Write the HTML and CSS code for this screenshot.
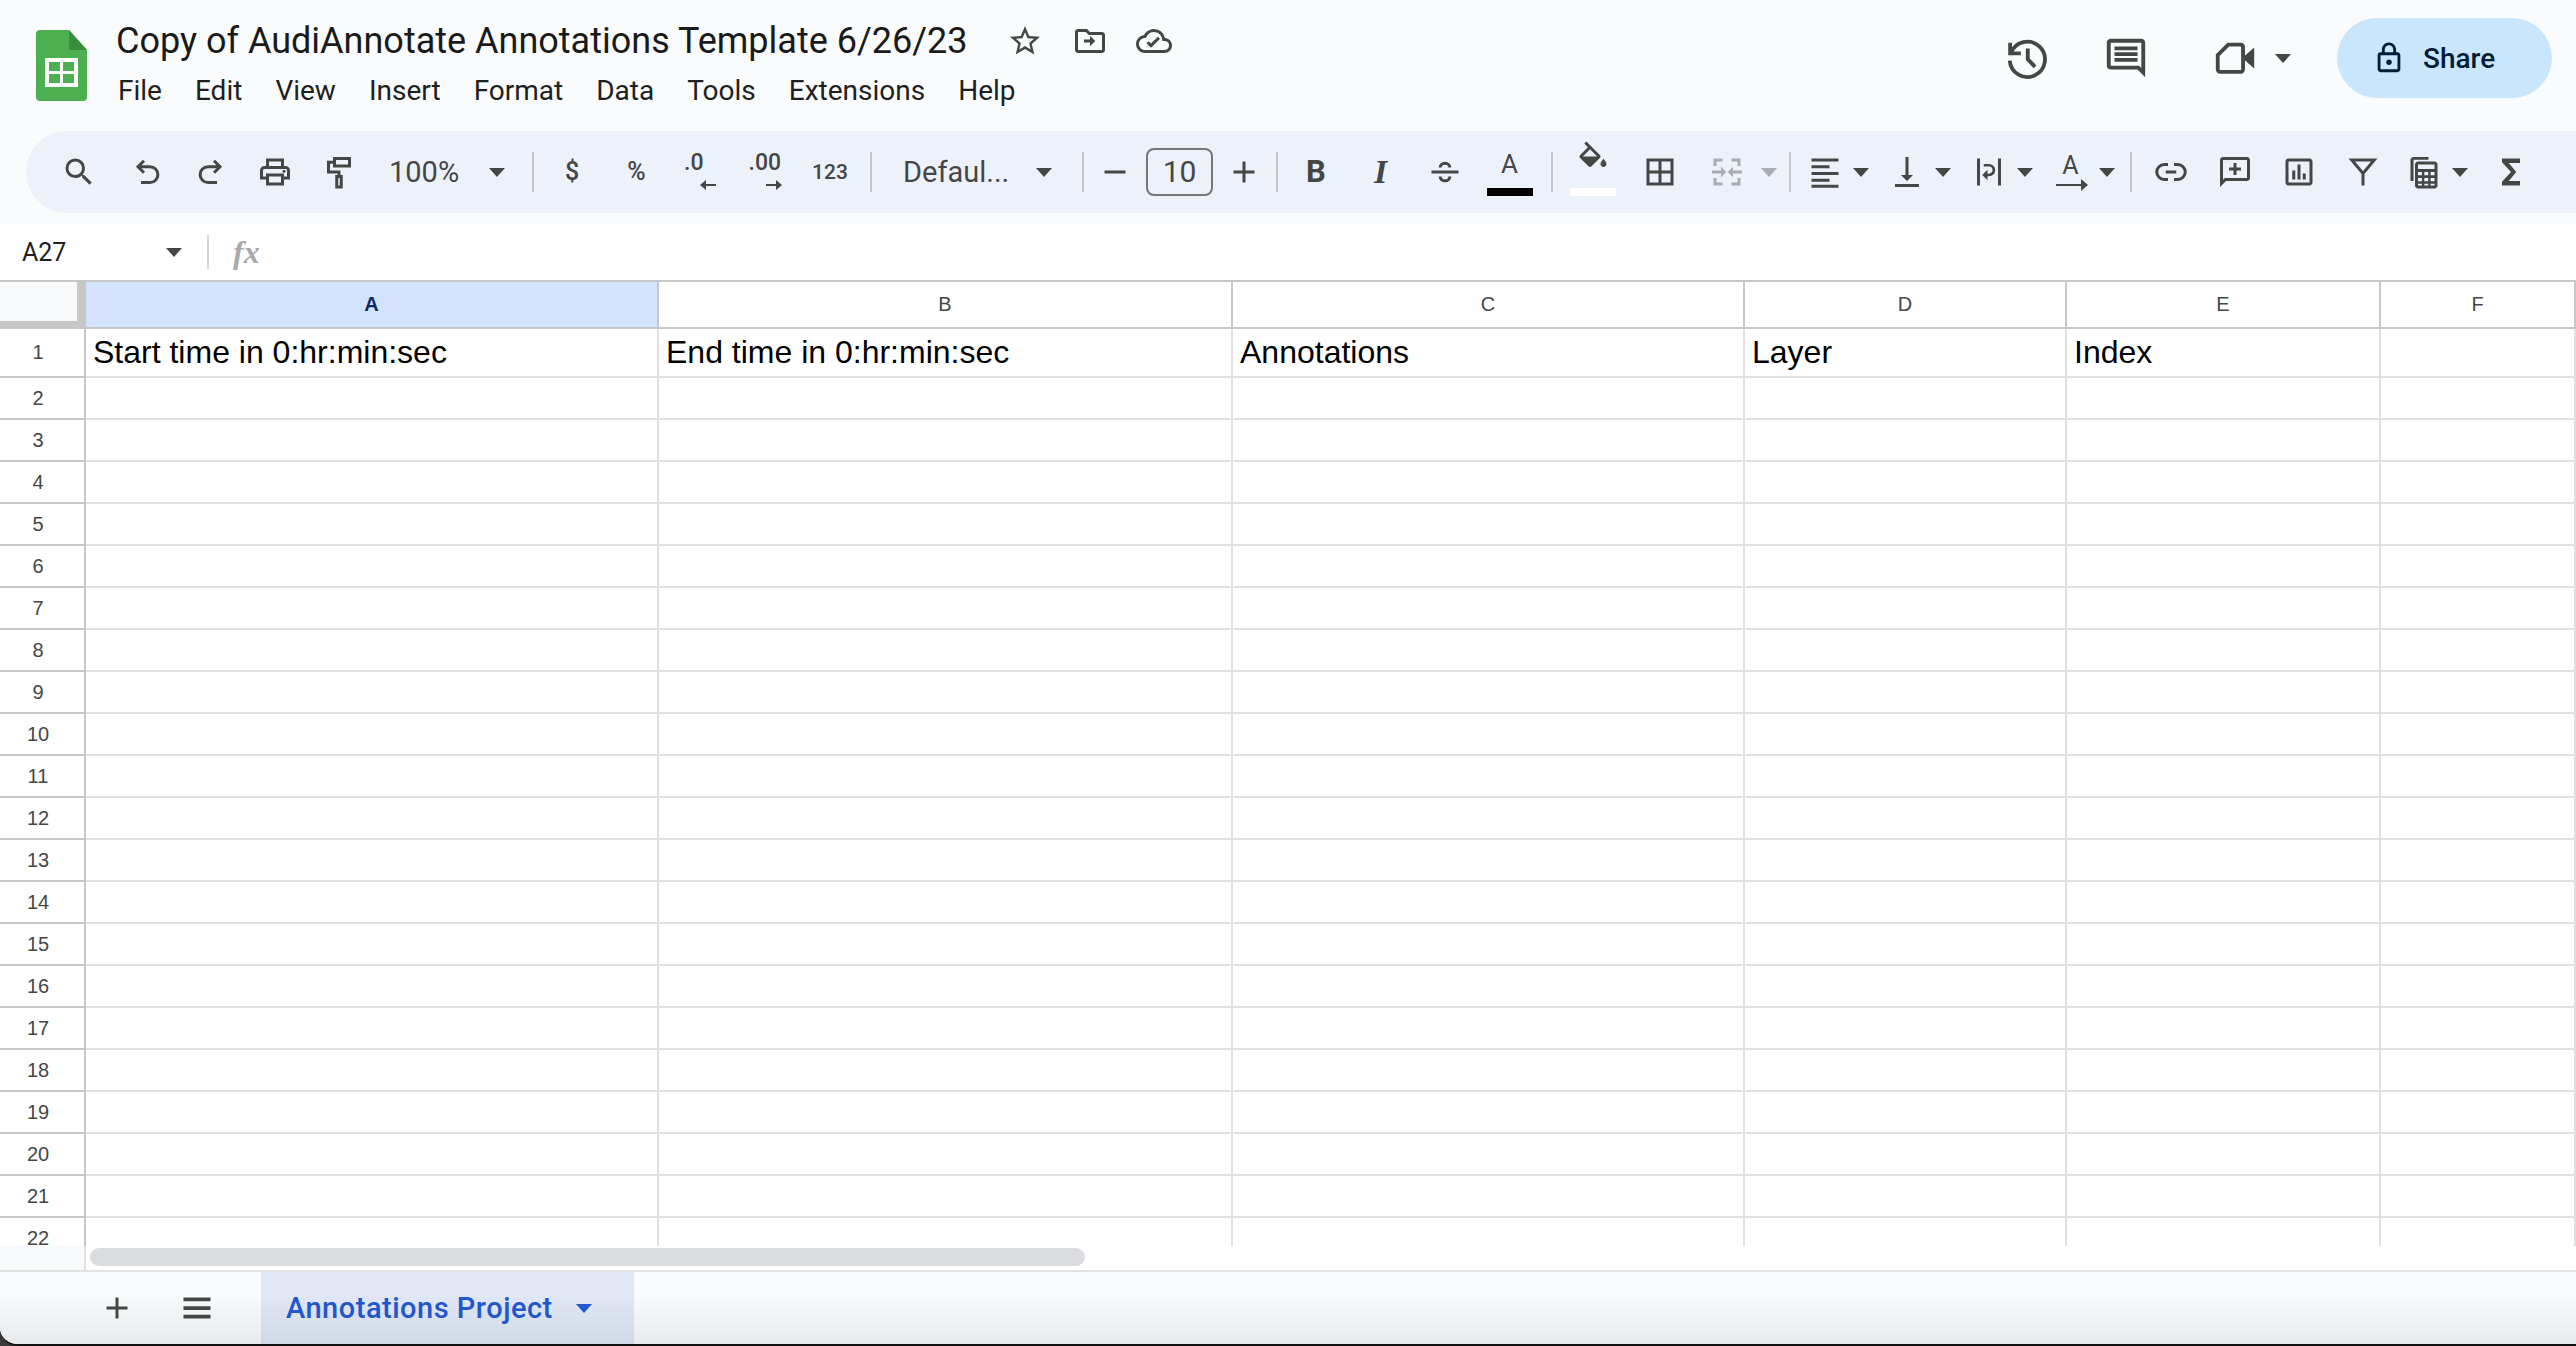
FILE: index.html
```html
<!DOCTYPE html>
<html lang="en">
<head>
    <meta charset="UTF-8">
    <title>Copy of AudiAnnotate Annotations Template 6/26/23</title>
    <link rel="stylesheet" href="styles.css">
</head>
<body>
<div class="app">
    <!-- title + menus -->
    <header class="topbar">
        <svg class="logo" viewBox="0 0 51 71">
            <path fill="#4caf50" d="M4 0H33L51 20V67a4 4 0 0 1-4 4H4a4 4 0 0 1-4-4V4a4 4 0 0 1 4-4z"/>
            <path fill="#388e3c" d="M33 0L51 20H33z"/>
            <path fill="#fff" d="M9 28H42V57H9z"/>
            <path fill="#4caf50" d="M13 32H24V41H13zM27 32H38V41H27zM13 44H24V53H13zM27 44H38V53H27z"/>
        </svg>
        <div class="docinfo">
            <div class="titlerow">
                <h1 class="doctitle">Copy of AudiAnnotate Annotations Template 6/26/23</h1>
                <svg class="ico title-star" viewBox="0 0 24 24"><path d="M22 9.24l-7.19-.62L12 2 9.19 8.63 2 9.24l5.46 4.73L5.82 21 12 17.27 18.18 21l-1.63-7.03L22 9.24zM12 15.4l-3.76 2.27 1-4.28-3.32-2.88 4.38-.38L12 6.1l1.71 4.04 4.38.38-3.32 2.88 1 4.28L12 15.4z"/></svg>
                <svg class="ico title-move" viewBox="0 0 24 24"><path d="M20 6h-8l-2-2H4c-1.1 0-2 .9-2 2v12c0 1.1.9 2 2 2h16c1.1 0 2-.9 2-2V8c0-1.1-.9-2-2-2zm0 12H4V6h5.17l2 2H20v10zM12 11H8v2h4v2.5l3.5-3.5L12 8.5V11z"/></svg>
                <svg class="ico title-cloud" viewBox="0 0 24 24"><path d="M19.35 10.04A7.49 7.49 0 0 0 12 4C9.11 4 6.6 5.64 5.35 8.04A5.994 5.994 0 0 0 0 14c0 3.31 2.69 6 6 6h13c2.76 0 5-2.24 5-5 0-2.64-2.05-4.78-4.65-4.96zM19 18H6c-2.21 0-4-1.79-4-4 0-2.05 1.53-3.76 3.56-3.97l1.07-.11.5-.95A5.47 5.47 0 0 1 12 6c2.62 0 4.88 1.86 5.39 4.43l.3 1.5 1.53.11A2.98 2.98 0 0 1 22 15c0 1.65-1.35 3-3 3zm-9-1.5l-3-3 1.4-1.4 1.6 1.6 4.6-4.6 1.4 1.4-6 6z"/></svg>
            </div>
            <nav class="menus">
                <span>File</span><span>Edit</span><span>View</span><span>Insert</span><span>Format</span><span>Data</span><span>Tools</span><span>Extensions</span><span>Help</span>
            </nav>
        </div>
        <div class="actions">
            <svg class="ico-lg act-history" viewBox="0 0 24 24"><path class="line" d="M3.2 4v5.6h5.6M3.6 9.4A9.2 9.2 0 1 1 3 13.4M12.4 7v5.6l3.8 4"/></svg>
            <svg class="ico-lg act-comment" viewBox="0 0 24 24"><path d="M21.99 4c0-1.1-.89-2-1.99-2H4c-1.1 0-2 .9-2 2v12c0 1.1.9 2 2 2h14l4 4-.01-18zM20 4v13.17L18.83 16H4V4h16zM6 12h12v2H6zm0-3h12v2H6zm0-3h12v2H6z"/></svg>
            <svg class="ico-lg act-video" viewBox="0 0 24 24"><path class="line" d="M8.5 5H15a1.2 1.2 0 0 1 1.200 1.200V18a1.200 1.200 0 0 1-1.200 1.200H4.200A1.200 1.200 0 0 1 3 18V10.500z"/><path d="M17 11l5-4.500v11L17 13z"/></svg>
            <span class="caret act-caret"></span>
            <div class="share">
                <svg class="share-lock" viewBox="0 0 24 24"><path d="M18 8h-1V6c0-2.760-2.240-5-5-5S7 3.240 7 6v2H6c-1.100 0-2 .9-2 2v10c0 1.100.9 2 2 2h12c1.100 0 2-.9 2-2V10c0-1.100-.9-2-2-2zM9 6c0-1.660 1.340-3 3-3s3 1.340 3 3v2H9V6zm9 14H6V10h12v10zm-6-3c1.100 0 2-.9 2-2s-.9-2-2-2-2 .9-2 2 .9 2 2 2z"/></svg>
                <span>Share</span>
            </div>
        </div>
    </header>

    <!-- toolbar -->
    <div class="toolbar">
        <div class="tb-group g-start">
            <svg class="ico after-search" viewBox="0 0 24 24"><path d="M15.500 14h-.79l-.28-.27A6.471 6.471 0 0 0 16 9.500 6.500 6.500 0 1 0 9.500 16c1.610 0 3.090-.59 4.270-1.570l.27.28v.79l5 4.990L20.490 19l-4.990-5zm-6 0C7.010 14 5 11.990 5 9.500S7.010 5 9.500 5 14 7.010 14 9.500 11.990 14 9.500 14z"/></svg>
            <svg class="ico" viewBox="0 0 24 24"><path class="line" d="M10 4.500L6 8.500l4 4M6 8.500h8a5 5 0 0 1 0 10.500H8"/></svg>
            <svg class="ico" viewBox="0 0 24 24"><path class="line" d="M14 4.500l4 4-4 4M18 8.500h-8a5 5 0 0 0 0 10.500h6"/></svg>
            <svg class="ico" viewBox="0 0 24 24"><path d="M19 8h-1V3H6v5H5c-1.660 0-3 1.340-3 3v6h4v4h12v-4h4v-6c0-1.660-1.340-3-3-3zM8 5h8v3H8V5zm8 12v2H8v-4h8v2zm2-2v-2H6v2H4v-4c0-.55.45-1 1-1h14c.55 0 1 .45 1 1v4h-2z"/><circle cx="18" cy="11.500" r="1"/></svg>
            <svg class="ico" viewBox="0 0 24 24"><path class="line" d="M9 3h10v5H9zM9 5.500H5v6.500h7v3M10.500 15h3v7h-3z"/></svg>
        </div>
        <div class="tb-group g-zoom">
            <span class="tb-text zoomval">100%</span>
            <span class="caret"></span>
        </div>
        <i class="sep"></i>
        <div class="tb-group g-num">
            <span class="tb-text num-ico">$</span>
            <span class="tb-text num-ico">%</span>
            <div class="dec"><b>.0</b><svg class="dec-arrow dec-left" viewBox="0 0 16 10"><path d="M6 0v4h10v2H6v4L0 5z"/></svg></div>
            <div class="dec"><b>.00</b><svg class="dec-arrow dec-right" viewBox="0 0 16 10"><path d="M10 0v4H0v2h10v4l6-5z"/></svg></div>
            <span class="tb-text num-ico more">123</span>
        </div>
        <i class="sep"></i>
        <div class="tb-group g-font">
            <span class="tb-text fontname">Defaul...</span>
            <span class="caret"></span>
        </div>
        <i class="sep"></i>
        <div class="tb-group g-size">
            <svg class="ico" viewBox="0 0 24 24"><path d="M5 11h14v2H5z"/></svg>
            <div class="sizebox">10</div>
            <svg class="ico" viewBox="0 0 24 24"><path d="M19 13h-6v6h-2v-6H5v-2h6V5h2v6h6z"/></svg>
        </div>
        <i class="sep"></i>
        <div class="tb-group g-style">
            <span class="stylechar bold">B</span>
            <span class="stylechar ital">I</span>
            <svg class="ico" viewBox="0 0 24 24"><path d="M3 11h18v2H3z"/><path class="line" d="M8.800 9c0-1.600 1.300-2.800 3.200-2.800s3.200 1.200 3.200 2.800M8.800 15c0 1.700 1.300 2.900 3.200 2.900s3.200-1.200 3.200-2.900"/></svg>
            <div class="colorbtn"><span>A</span><i class="swatch black"></i></div>
        </div>
        <i class="sep"></i>
        <div class="tb-group g-fill">
            <div class="colorbtn">
                <svg class="fill-ico" viewBox="0 0 24 24"><path d="M16.560 9.940L7.620 1 6.200 2.410l2.380 2.380-5.150 5.150a1.490 1.490 0 0 0 0 2.120l5.500 5.500c.29.29.68.44 1.060.44s.77-.15 1.060-.44l5.500-5.500c.59-.58.59-1.530.01-2.120zM5.210 11L10 6.210 14.790 11H5.210zM19 12.500s-2 2.170-2 3.500c0 1.100.9 2 2 2s2-.9 2-2c0-1.330-2-3.500-2-3.500z"/></svg>
                <i class="swatch white"></i>
            </div>
            <svg class="ico" viewBox="0 0 24 24"><path d="M3 3v18h18V3H3zm8 16H5v-6h6v6zm0-8H5V5h6v6zm8 8h-6v-6h6v6zm0-8h-6V5h6v6z"/></svg>
            <div class="split off">
                <svg class="ico" viewBox="0 0 24 24"><path d="M3 3h6v2H5v3H3zM15 3h6v5h-2V5h-4zM3 16h2v3h4v2H3zM19 16h2v5h-6v-2h4z"/><path d="M2 11h6V8.500l3.500 3.500L8 15.500V13H2zM22 11h-6V8.500L12.500 12l3.500 3.500V13h6z"/></svg>
                <span class="caret"></span>
            </div>
        </div>
        <i class="sep"></i>
        <div class="tb-group g-align">
            <div class="split">
                <svg class="ico" viewBox="0 0 24 24"><path d="M3 3h18v2H3zM3 7.500h12v2H3zM3 12h18v2H3zM3 16.500h12v2H3zM3 20.500h18v2H3z"/></svg>
                <span class="caret"></span>
            </div>
            <div class="split">
                <svg class="ico" viewBox="0 0 24 24"><path d="M4 20h16v2H4zM11 2h2v12h3l-4 4-4-4h3z"/></svg>
                <span class="caret"></span>
            </div>
            <div class="split">
                <svg class="ico" viewBox="0 0 24 24"><path d="M4 3h2v18H4zM18 3h2v18h-2z"/><path class="line thin" d="M8.500 7.500h3.500a3 3 0 0 1 0 6.500H9.500"/><path d="M11 10.500v7L7.500 14z"/></svg>
                <span class="caret"></span>
            </div>
            <div class="split">
                <div class="rotate"><span>A</span><svg viewBox="0 0 32 12"><path d="M0 5h25V0l7 6-7 6V7H0z"/></svg></div>
                <span class="caret"></span>
            </div>
        </div>
        <i class="sep"></i>
        <div class="tb-group g-insert">
            <svg class="ico" viewBox="0 0 24 24"><path class="line" d="M10 7H7.500a5 5 0 0 0 0 10H10M14 7h2.500a5 5 0 0 1 0 10H14M8.500 12h7"/></svg>
            <svg class="ico" viewBox="0 0 24 24"><path d="M22 4c0-1.100-.9-2-2-2H4c-1.100 0-2 .9-2 2v18l4-4h14c1.100 0 2-.9 2-2V4zm-2 12H5.170L4 17.170V4h16v12zM11 6h2v3h3v2h-3v3h-2v-3H8V9h3z"/></svg>
            <svg class="ico" viewBox="0 0 24 24"><path d="M19 3H5c-1.100 0-2 .9-2 2v14c0 1.100.9 2 2 2h14c1.100 0 2-.9 2-2V5c0-1.100-.9-2-2-2zm0 16H5V5h14v14zM7.500 11h2v6h-2zM11 7h2v10h-2zM14.500 13h2v4h-2z"/></svg>
            <svg class="ico" viewBox="0 0 24 24"><path class="line" d="M4.500 4h15L12 13zM12 13v8"/></svg>
            <div class="split calc-split">
                <svg class="ico" viewBox="0 0 24 24"><path d="M3 4c0-1.100.9-2 2-2h10v1.800H5V18H3z"/><path d="M8 5h11c1.100 0 2 .9 2 2v14c0 1.100-.9 2-2 2H8c-1.100 0-2-.9-2-2V7c0-1.100.9-2 2-2zm0 2v3h11V7zm0 5v2.200h2.600V12zm4.200 0v2.200h2.600V12zm4.200 0v2.200H19V12zM8 16v2.200h2.600V16zm4.200 0v2.200h2.600V16zm4.200 0v2.200H19V16zM8 19.800V21h2.600v-1.200zm4.200 0V21h2.600v-1.200zm4.200 0V21H19v-1.200z"/></svg>
                <span class="caret"></span>
            </div>
            <svg class="ico sigma" viewBox="0 0 24 24"><path d="M18 3H6v2.500l6 6.500-6 6.500V21h12v-3h-7.500l5-6-5-6H18z"/></svg>
        </div>
    </div>

    <!-- name box / formula -->
    <div class="formulabar">
        <span class="namebox">A27</span>
        <span class="caret"></span>
        <i class="fbar-sep"></i>
        <span class="fx">fx</span>
    </div>

    <!-- sheet -->
    <div class="sheet">
        <div class="row colhead">
            <div class="corner"></div>
            <div class="head on">A</div><div class="head">B</div><div class="head">C</div><div class="head">D</div><div class="head">E</div><div class="head">F</div>
        </div>
        <div class="row first"><div class="rownum">1</div><div class="cell">Start time in 0:hr:min:sec</div><div class="cell">End time in 0:hr:min:sec</div><div class="cell">Annotations</div><div class="cell">Layer</div><div class="cell">Index</div><div class="cell"></div></div>
        <div class="row"><div class="rownum">2</div><div class="cell"></div><div class="cell"></div><div class="cell"></div><div class="cell"></div><div class="cell"></div><div class="cell"></div></div>
        <div class="row"><div class="rownum">3</div><div class="cell"></div><div class="cell"></div><div class="cell"></div><div class="cell"></div><div class="cell"></div><div class="cell"></div></div>
        <div class="row"><div class="rownum">4</div><div class="cell"></div><div class="cell"></div><div class="cell"></div><div class="cell"></div><div class="cell"></div><div class="cell"></div></div>
        <div class="row"><div class="rownum">5</div><div class="cell"></div><div class="cell"></div><div class="cell"></div><div class="cell"></div><div class="cell"></div><div class="cell"></div></div>
        <div class="row"><div class="rownum">6</div><div class="cell"></div><div class="cell"></div><div class="cell"></div><div class="cell"></div><div class="cell"></div><div class="cell"></div></div>
        <div class="row"><div class="rownum">7</div><div class="cell"></div><div class="cell"></div><div class="cell"></div><div class="cell"></div><div class="cell"></div><div class="cell"></div></div>
        <div class="row"><div class="rownum">8</div><div class="cell"></div><div class="cell"></div><div class="cell"></div><div class="cell"></div><div class="cell"></div><div class="cell"></div></div>
        <div class="row"><div class="rownum">9</div><div class="cell"></div><div class="cell"></div><div class="cell"></div><div class="cell"></div><div class="cell"></div><div class="cell"></div></div>
        <div class="row"><div class="rownum">10</div><div class="cell"></div><div class="cell"></div><div class="cell"></div><div class="cell"></div><div class="cell"></div><div class="cell"></div></div>
        <div class="row"><div class="rownum">11</div><div class="cell"></div><div class="cell"></div><div class="cell"></div><div class="cell"></div><div class="cell"></div><div class="cell"></div></div>
        <div class="row"><div class="rownum">12</div><div class="cell"></div><div class="cell"></div><div class="cell"></div><div class="cell"></div><div class="cell"></div><div class="cell"></div></div>
        <div class="row"><div class="rownum">13</div><div class="cell"></div><div class="cell"></div><div class="cell"></div><div class="cell"></div><div class="cell"></div><div class="cell"></div></div>
        <div class="row"><div class="rownum">14</div><div class="cell"></div><div class="cell"></div><div class="cell"></div><div class="cell"></div><div class="cell"></div><div class="cell"></div></div>
        <div class="row"><div class="rownum">15</div><div class="cell"></div><div class="cell"></div><div class="cell"></div><div class="cell"></div><div class="cell"></div><div class="cell"></div></div>
        <div class="row"><div class="rownum">16</div><div class="cell"></div><div class="cell"></div><div class="cell"></div><div class="cell"></div><div class="cell"></div><div class="cell"></div></div>
        <div class="row"><div class="rownum">17</div><div class="cell"></div><div class="cell"></div><div class="cell"></div><div class="cell"></div><div class="cell"></div><div class="cell"></div></div>
        <div class="row"><div class="rownum">18</div><div class="cell"></div><div class="cell"></div><div class="cell"></div><div class="cell"></div><div class="cell"></div><div class="cell"></div></div>
        <div class="row"><div class="rownum">19</div><div class="cell"></div><div class="cell"></div><div class="cell"></div><div class="cell"></div><div class="cell"></div><div class="cell"></div></div>
        <div class="row"><div class="rownum">20</div><div class="cell"></div><div class="cell"></div><div class="cell"></div><div class="cell"></div><div class="cell"></div><div class="cell"></div></div>
        <div class="row"><div class="rownum">21</div><div class="cell"></div><div class="cell"></div><div class="cell"></div><div class="cell"></div><div class="cell"></div><div class="cell"></div></div>
        <div class="row last"><div class="rownum">22</div><div class="cell"></div><div class="cell"></div><div class="cell"></div><div class="cell"></div><div class="cell"></div><div class="cell"></div></div>
    </div>

    <div class="hscroll">
        <div class="hscroll-side"></div>
        <div class="hscroll-thumb"></div>
    </div>

    <!-- sheet tabs -->
    <footer class="tabbar">
        <svg class="ico" viewBox="0 0 24 24"><path d="M19 13h-6v6h-2v-6H5v-2h6V5h2v6h6z"/></svg>
        <svg class="ico" viewBox="0 0 24 24"><path d="M3 5h18v2.500H3zM3 10.750h18v2.500H3zM3 16.500h18V19H3z"/></svg>
        <div class="tab">
            <span>Annotations Project</span>
            <i class="caret"></i>
        </div>
    </footer>
</div>
</body>
</html>
```

FILE: styles.css
```css
*{
    box-sizing: border-box;
}
body{
    margin: 0;
    background-color: #3a3a3a;
    font-family: Roboto, "Liberation Sans", sans-serif;
    color: #1f1f1f;
}
.app{
    width: 2576px;
    height: 1346px;
    display: flex;
    flex-direction: column;
    overflow: hidden;
    background-color: #f9fbfd;
    border-bottom: 2px solid #111;
    border-bottom-left-radius: 18px;
}
svg{
    display: block;
    flex: none;
    fill: #444746;
}
.line{
    fill: none;
    stroke: #444746;
    stroke-width: 2;
}
.thin{
    stroke-width: 1.8;
}
.ico{
    width: 36px;
    height: 36px;
}
.ico-lg{
    width: 46px;
    height: 46px;
}
.caret{
    display: block;
    flex: none;
    width: 0;
    height: 0;
    border-left: 8px solid transparent;
    border-right: 8px solid transparent;
    border-top: 9px solid #444746;
}

/* top */
.topbar{
    height: 131px;
    flex: none;
    display: flex;
    padding-left: 36px;
}
.logo{
    width: 51px;
    height: 71px;
    margin-top: 30px;
}
.docinfo{
    margin-left: 29px;
    padding-top: 18px;
}
.titlerow{
    display: flex;
    align-items: center;
    height: 46px;
}
.doctitle{
    margin: 0;
    font-size: 36px;
    font-weight: 400;
    line-height: 46px;
    color: #1a1a1a;
    white-space: nowrap;
}
.title-star{
    margin-left: 39px;
}
.title-move{
    margin-left: 29px;
}
.title-cloud{
    margin-left: 28px;
}
.menus{
    display: flex;
    gap: 33px;
    margin-top: 7px;
    margin-left: 2px;
    font-size: 28px;
    line-height: 40px;
}
.actions{
    margin-left: auto;
    padding-right: 24px;
    display: flex;
    align-items: center;
    height: 116px;
}
.act-history{
    margin-right: 53px;
}
.act-video{
    margin-left: 63px;
}
.act-caret{
    margin-left: 17px;
}
.share{
    margin-left: 46px;
    width: 215px;
    height: 80px;
    border-radius: 40px;
    background-color: #c9e6fd;
    display: flex;
    align-items: center;
    padding-left: 35px;
    gap: 17px;
    font-size: 28px;
    font-weight: 500;
    color: #001d35;
}
.share-lock{
    width: 34px;
    height: 34px;
    fill: #001d35;
}

/* toolbar */
.toolbar{
    height: 82px;
    flex: none;
    margin-left: 26px;
    padding-left: 35px;
    display: flex;
    align-items: center;
    background-color: #edf2fa;
    border-radius: 41px 0 0 41px;
    color: #444746;
}
.tb-group{
    display: flex;
    align-items: center;
    gap: 28px;
}
.sep{
    display: block;
    flex: none;
    width: 2px;
    height: 40px;
    margin: 0 22px;
    background-color: #c7c7c7;
}
.tb-text{
    font-size: 29px;
    line-height: 36px;
    white-space: nowrap;
}
.after-search{
    margin-right: 4px;
}
.g-zoom{
    margin-left: 32px;
    gap: 26px;
    margin-right: 5px;
}
.zoomval{
    width: 74px;
}
.g-num{
    gap: 28.5px;
    margin-left: -2px;
}
.num-ico{
    width: 36px;
    text-align: center;
    font-size: 25px;
    font-weight: 500;
}
.more{
    font-size: 21px;
}
.dec{
    width: 36px;
    height: 36px;
    position: relative;
}
.dec b{
    display: block;
    font-size: 23px;
    line-height: 24px;
    font-weight: 500;
    white-space: nowrap;
    margin-left: 1px;
    margin-top: -3px;
}
.dec-arrow{
    width: 16px;
    height: 10px;
    position: absolute;
    top: 26px;
}
.dec-left{
    left: 17px;
}
.dec-right{
    left: 18px;
}
.g-font{
    margin-left: 9px;
    margin-right: 8px;
}
.fontname{
    width: 105px;
}
.g-size{
    gap: 13px;
    margin-left: -9px;
    margin-right: -8px;
}
.sizebox{
    width: 67px;
    height: 48px;
    border: 2px solid #747775;
    border-radius: 8px;
    text-align: center;
    font-size: 30px;
    line-height: 44px;
}
.g-style{
    gap: 28.5px;
    margin-left: -2px;
    margin-right: 1px;
}
.stylechar{
    width: 36px;
    text-align: center;
    font-size: 31px;
    line-height: 36px;
}
.bold{
    font-weight: 700;
}
.ital{
    font-family: "Liberation Serif", serif;
    font-style: italic;
    font-weight: 700;
    font-size: 34px;
}
.colorbtn{
    width: 36px;
    height: 46px;
    position: relative;
    text-align: center;
    font-size: 26px;
    line-height: 28px;
    margin-top: 2px;
}
.swatch{
    position: absolute;
    left: -5px;
    bottom: 0;
    width: 46px;
    height: 8px;
}
.black{
    background-color: #000;
}
.white{
    background-color: #fff;
}
.fill-ico{
    width: 36px;
    height: 36px;
    margin-top: -10px;
}
.g-fill{
    gap: 31px;
    margin-right: -10px;
}
.split{
    display: flex;
    align-items: center;
    gap: 10px;
}
.off{
    gap: 16px;
    opacity: .4;
}
.g-align{
    gap: 20px;
    margin-left: -6px;
    margin-right: -7px;
}
.rotate{
    width: 36px;
    height: 40px;
    position: relative;
    text-align: center;
    font-size: 25px;
    line-height: 28px;
}
.rotate svg{
    position: absolute;
    left: 3px;
    top: 27px;
    width: 32px;
    height: 12px;
}
.g-insert{
    margin-left: -1px;
}
.calc-split{
    margin-left: -3px;
}
.sigma{
    margin-left: -3px;
}

/* formula bar */
.formulabar{
    height: 56px;
    flex: none;
    margin-top: 11px;
    padding-left: 22px;
    display: flex;
    align-items: center;
    background-color: #fff;
}
.namebox{
    width: 144px;
    font-size: 25px;
}
.fbar-sep{
    display: block;
    width: 2px;
    height: 34px;
    margin-left: 25px;
    background-color: #d5d5d5;
}
.fx{
    margin-left: 24px;
    font-family: "Liberation Serif", serif;
    font-style: italic;
    font-weight: 700;
    font-size: 32px;
    color: #a9a9a9;
}

/* grid */
.row{
    display: grid;
    grid-template-columns: 86px 573px 574px 512px 322px 314px 1fr;
    height: 42px;
    background-color: #fff;
}
.colhead{
    height: 49px;
    border-top: 2px solid #c7c7c7;
}
.first{
    height: 49px;
}
.last{
    height: 28px;
    overflow: hidden;
}
.corner{
    background-color: #f8f9fa;
    border-right: 9px solid #c7c7c7;
    border-bottom: 8px solid #c7c7c7;
}
.head{
    border-right: 2px solid #c7c7c7;
    border-bottom: 2px solid #c7c7c7;
    text-align: center;
    font-family: "Liberation Sans", sans-serif;
    font-size: 20px;
    line-height: 45px;
    color: #444746;
}
.head.on{
    background-color: #d3e3fd;
    color: #0b2a63;
    font-weight: 700;
}
.rownum{
    border-right: 2px solid #c7c7c7;
    border-bottom: 2px solid #c7c7c7;
    padding-right: 8px;
    text-align: center;
    font-family: "Liberation Sans", sans-serif;
    font-size: 20px;
    line-height: 40px;
    color: #444746;
}
.first .rownum{
    line-height: 47px;
}
.cell{
    border-right: 2px solid #e1e1e1;
    border-bottom: 2px solid #e1e1e1;
    padding-left: 7px;
    font-family: "Liberation Sans", sans-serif;
    font-size: 32px;
    line-height: 47px;
    color: #000;
    white-space: nowrap;
}
.hscroll{
    height: 26px;
    flex: none;
    display: flex;
    background-color: #fff;
    border-bottom: 2px solid #e0e3e1;
}
.hscroll-side{
    width: 86px;
    background-color: #f8f9fa;
    border-right: 2px solid #e1e1e1;
}
.hscroll-thumb{
    width: 995px;
    height: 18px;
    margin: 2px 0 0 4px;
    border-radius: 9px;
    background-color: #dadce0;
}

/* tabs */
.tabbar{
    flex: 1;
    display: flex;
    align-items: center;
    padding-left: 99px;
    gap: 44px;
    background: linear-gradient(#f9fbfd 30%, #e8e9eb);
}
.tab{
    height: 100%;
    width: 373px;
    margin-left: 2px;
    padding-left: 25px;
    display: flex;
    align-items: center;
    gap: 23px;
    background: linear-gradient(#e1e7f5 30%, #d0d8e6);
    font-size: 29px;
    font-weight: 500;
    letter-spacing: .5px;
    color: #2257cb;
    white-space: nowrap;
}
.tab .caret{
    border-top-color: #2257cb;
}
```
